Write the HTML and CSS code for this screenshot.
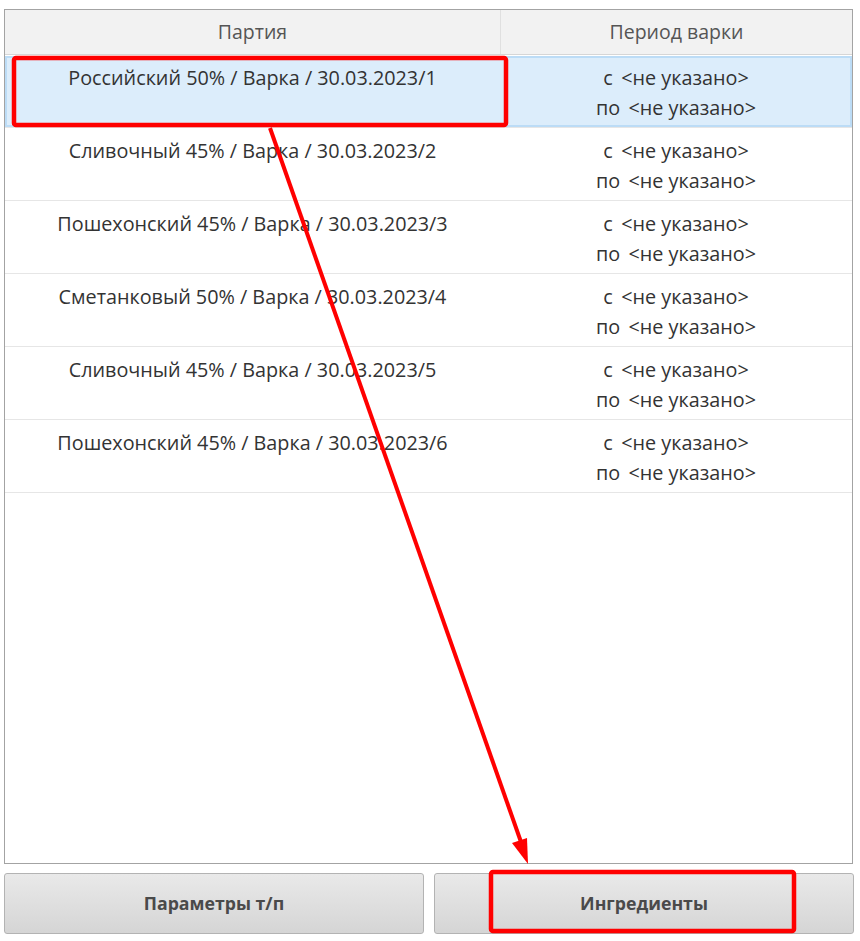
FILE: index.html
```html
<!DOCTYPE html>
<html lang="ru">
<head>
<meta charset="utf-8">
<link rel="stylesheet" href="styles.css">
</head>
<body>
<div class="page">
  <div class="table">
    <div class="head">
      <div class="hcell">Партия</div>
      <div class="hcell">Период варки</div>
    </div>
    <div class="row selected">
      <div class="cell">Российский 50% / Варка / 30.03.2023/1</div>
      <div class="cell">с &thinsp;&lt;не указано&gt;<br>по &thinsp;&lt;не указано&gt;</div>
    </div>
    <div class="row">
      <div class="cell">Сливочный 45% / Варка / 30.03.2023/2</div>
      <div class="cell">с &thinsp;&lt;не указано&gt;<br>по &thinsp;&lt;не указано&gt;</div>
    </div>
    <div class="row">
      <div class="cell">Пошехонский 45% / Варка / 30.03.2023/3</div>
      <div class="cell">с &thinsp;&lt;не указано&gt;<br>по &thinsp;&lt;не указано&gt;</div>
    </div>
    <div class="row">
      <div class="cell">Сметанковый 50% / Варка / 30.03.2023/4</div>
      <div class="cell">с &thinsp;&lt;не указано&gt;<br>по &thinsp;&lt;не указано&gt;</div>
    </div>
    <div class="row">
      <div class="cell">Сливочный 45% / Варка / 30.03.2023/5</div>
      <div class="cell">с &thinsp;&lt;не указано&gt;<br>по &thinsp;&lt;не указано&gt;</div>
    </div>
    <div class="row">
      <div class="cell">Пошехонский 45% / Варка / 30.03.2023/6</div>
      <div class="cell">с &thinsp;&lt;не указано&gt;<br>по &thinsp;&lt;не указано&gt;</div>
    </div>
  </div>
  <div class="buttons">
    <button class="btn">Параметры т/п</button>
    <button class="btn">Ингредиенты</button>
  </div>
</div>
<svg class="annot" width="860" height="941" viewBox="0 0 860 941">
  <rect x="14" y="58" width="492" height="67" rx="2" fill="none" stroke="#ff0000" stroke-width="4.5"/>
  <rect x="491" y="872" width="303" height="59" rx="2" fill="none" stroke="#ff0000" stroke-width="4.5"/>
  <line x1="270" y1="128" x2="521" y2="842" stroke="#ff0000" stroke-width="4"/>
  <polygon points="528,864 512,843 527,838" fill="#ff0000"/>
</svg>
</body>
</html>
```

FILE: styles.css
```css
html, body {
  margin: 0;
  padding: 0;
  background: #ffffff;
}
body {
  font-family: "Open Sans", "Liberation Sans", sans-serif;
  width: 860px;
  height: 941px;
  position: relative;
  overflow: hidden;
}
.page {
  padding: 9px 7px 0 4px;
  display: flex;
  flex-direction: column;
  gap: 9px;
}
.table {
  height: 853px;
  border: 1px solid #a3a3a3;
  background: #fff;
  display: flex;
  flex-direction: column;
}
.head {
  display: grid;
  grid-template-columns: 495px 1fr;
  height: 44px;
  background: #f2f2f2;
  border-bottom: 1px solid #d6d6d6;
}
.hcell {
  display: flex;
  align-items: center;
  justify-content: center;
  font-size: 19.5px;
  color: #555555;
  padding-bottom: 1px;
}
.hcell + .hcell {
  border-left: 1px solid #e0e0e0;
}
.row {
  display: grid;
  grid-template-columns: 495px 1fr;
  height: 72px;
  border-bottom: 1px solid #e6e6e6;
  box-sizing: content-box;
}
.row.selected {
  margin-top: 1px;
  height: 71px;
  background: #dcedfb;
  box-shadow: inset 0 0 0 2px #bcdcf6;
}
.cell {
  text-align: center;
  font-size: 19.8px;
  line-height: 30px;
  color: #333333;
  padding-top: 8px;
}
.row.selected .cell {
  padding-top: 7px;
}
.buttons {
  display: grid;
  grid-template-columns: 420px 420px;
  column-gap: 10px;
}
.btn {
  height: 61px;
  border: 1px solid #b3b3b3;
  border-radius: 3px;
  background: linear-gradient(#e9e9e9, #d5d5d5);
  font-family: "Open Sans", "Liberation Sans", sans-serif;
  font-weight: bold;
  font-size: 17.7px;
  color: #4a4a4a;
  padding: 0 0 2px 0;
}
.annot {
  position: absolute;
  left: 0;
  top: 0;
  pointer-events: none;
}
```
